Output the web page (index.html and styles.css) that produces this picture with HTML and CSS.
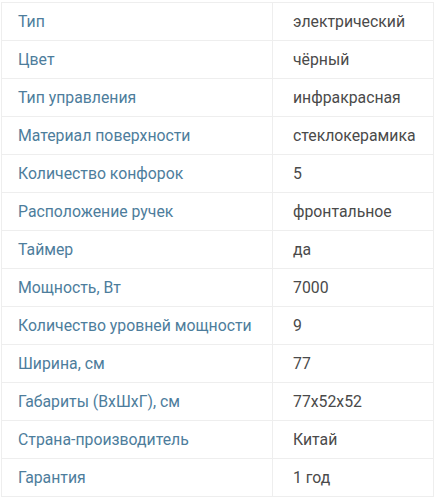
FILE: index.html
```html
<!DOCTYPE html>
<html lang="ru">
<head>
<meta charset="utf-8">
<link rel="stylesheet" href="styles.css">
</head>
<body>
<table class="specs">
  <tr><td class="k">Тип</td><td class="v">электрический</td></tr>
  <tr><td class="k">Цвет</td><td class="v">чёрный</td></tr>
  <tr><td class="k">Тип управления</td><td class="v">инфракрасная</td></tr>
  <tr><td class="k">Материал поверхности</td><td class="v">стеклокерамика</td></tr>
  <tr><td class="k">Количество конфорок</td><td class="v">5</td></tr>
  <tr><td class="k">Расположение ручек</td><td class="v">фронтальное</td></tr>
  <tr><td class="k">Таймер</td><td class="v">да</td></tr>
  <tr><td class="k">Мощность, Вт</td><td class="v">7000</td></tr>
  <tr><td class="k">Количество уровней мощности</td><td class="v">9</td></tr>
  <tr><td class="k">Ширина, см</td><td class="v">77</td></tr>
  <tr><td class="k">Габариты (ВхШхГ), см</td><td class="v">77x52x52</td></tr>
  <tr><td class="k">Страна-производитель</td><td class="v">Китай</td></tr>
  <tr><td class="k">Гарантия</td><td class="v">1 год</td></tr>
</table>
</body>
</html>
```
FILE: styles.css
```css
html, body {
  margin: 0;
  padding: 0;
  background: #fff;
}
body {
  padding: 2px 2px 0 1px;
  font-family: Roboto, "Noto Sans", sans-serif;
  font-size: 15.8px;
}
.specs {
  width: 433px;
  border-collapse: collapse;
  table-layout: fixed;
}
.specs td {
  border: 1px solid #eeeeee;
  height: 38px;
  padding: 0;
  box-sizing: border-box;
  vertical-align: middle;
  line-height: 20px;
}
.specs .k {
  width: 271px;
  padding-left: 16px;
  color: #4d7d9c;
}
.specs .v {
  padding-left: 20px;
  color: #4a4a4a;
}
```
